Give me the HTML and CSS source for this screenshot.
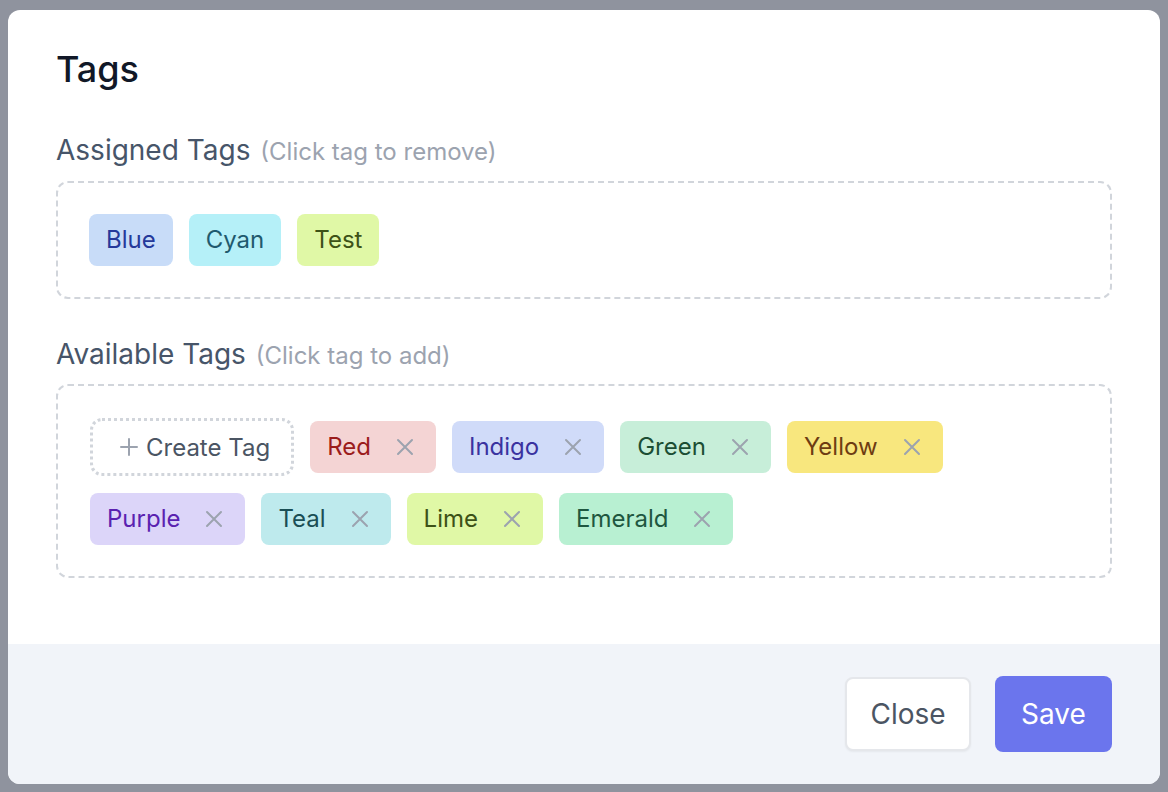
FILE: index.html
```html
<!DOCTYPE html>
<html>
<head>
<meta charset="utf-8">
<link rel="stylesheet" href="styles.css">
</head>
<body>
<div class="backdrop">
  <div class="modal">
    <div class="modal-body">
      <h2 class="title">Tags</h2>

      <div class="label">Assigned Tags <span class="hint">(Click tag to remove)</span></div>
      <div class="box box-assigned">
        <span class="tag t-blue">Blue</span>
        <span class="tag t-cyan">Cyan</span>
        <span class="tag t-lime">Test</span>
      </div>

      <div class="label label-available">Available Tags <span class="hint">(Click tag to add)</span></div>
      <div class="box box-available">
        <span class="create">
          <svg class="plus" viewBox="0 0 18 18" width="18" height="18"><path d="M9 1v16M1 9h16" stroke="#9ca3af" stroke-width="2" fill="none" stroke-linecap="round"/></svg>
          Create Tag
        </span>
        <span class="tag rm t-red">Red<svg class="x" viewBox="0 0 18 18" width="18" height="18"><path d="M2 2l14 14M16 2L2 16" stroke="currentColor" stroke-width="2" fill="none" stroke-linecap="round"/></svg></span>
        <span class="tag rm t-indigo">Indigo<svg class="x" viewBox="0 0 18 18" width="18" height="18"><path d="M2 2l14 14M16 2L2 16" stroke="currentColor" stroke-width="2" fill="none" stroke-linecap="round"/></svg></span>
        <span class="tag rm t-green">Green<svg class="x" viewBox="0 0 18 18" width="18" height="18"><path d="M2 2l14 14M16 2L2 16" stroke="currentColor" stroke-width="2" fill="none" stroke-linecap="round"/></svg></span>
        <span class="tag rm t-yellow">Yellow<svg class="x" viewBox="0 0 18 18" width="18" height="18"><path d="M2 2l14 14M16 2L2 16" stroke="currentColor" stroke-width="2" fill="none" stroke-linecap="round"/></svg></span>
        <span class="tag rm t-purple">Purple<svg class="x" viewBox="0 0 18 18" width="18" height="18"><path d="M2 2l14 14M16 2L2 16" stroke="currentColor" stroke-width="2" fill="none" stroke-linecap="round"/></svg></span>
        <span class="tag rm t-teal">Teal<svg class="x" viewBox="0 0 18 18" width="18" height="18"><path d="M2 2l14 14M16 2L2 16" stroke="currentColor" stroke-width="2" fill="none" stroke-linecap="round"/></svg></span>
        <span class="tag rm t-lime">Lime<svg class="x" viewBox="0 0 18 18" width="18" height="18"><path d="M2 2l14 14M16 2L2 16" stroke="currentColor" stroke-width="2" fill="none" stroke-linecap="round"/></svg></span>
        <span class="tag rm t-emerald">Emerald<svg class="x" viewBox="0 0 18 18" width="18" height="18"><path d="M2 2l14 14M16 2L2 16" stroke="currentColor" stroke-width="2" fill="none" stroke-linecap="round"/></svg></span>
      </div>
    </div>
    <div class="modal-footer">
      <button class="btn btn-close">Close</button>
      <button class="btn btn-save">Save</button>
    </div>
  </div>
</div>
</body>
</html>
```

FILE: styles.css
```css
* { box-sizing: border-box; }
html, body {
  margin: 0;
  padding: 0;
  width: 1168px;
  height: 792px;
  overflow: hidden;
  font-family: Inter, "Noto Sans", "Liberation Sans", sans-serif;
}
.backdrop {
  width: 1168px;
  height: 792px;
  background: #8f939e;
  padding: 10px 8px 8px 8px;
}
.modal {
  width: 1152px;
  height: 774px;
  background: #ffffff;
  border-radius: 12px;
  overflow: hidden;
  display: flex;
  flex-direction: column;
}
.modal-body {
  padding: 35px 48px 0 48px;
  flex: 1;
}
.title {
  margin: 0;
  font-size: 36px;
  line-height: 48px;
  font-weight: 500;
  color: #111827;
}
.label {
  margin-top: 37px;
  font-size: 28px;
  line-height: 40px;
  color: #475569;
  font-weight: 400;
}
.label-available { margin-top: 35px; }
.hint {
  font-size: 24px;
  color: #9ca3af;
  margin-left: 2px;
}
.box {
  border: 2px dashed #d1d5db;
  border-radius: 12px;
  display: flex;
  flex-wrap: wrap;
  align-items: center;
  gap: 17px 16px;
}
.box-assigned { margin-top: 9px; padding: 31px; }
.box-available { margin-top: 8px; padding: 32px 32px 31px 32px; }
.tag {
  display: inline-flex;
  align-items: center;
  height: 52px;
  padding: 0 17px;
  border-radius: 8px;
  font-size: 24px;
  line-height: 30px;
}
.tag.rm { padding-right: 22px; }
.tag .x {
  margin-left: 25px;
  color: #9ca3af;
}
.create {
  display: inline-flex;
  align-items: center;
  height: 58px;
  padding: 0 21px 0 27px;
  border: 3px dotted #d1d5db;
  border-radius: 12px;
  font-size: 24px;
  color: #4b5563;
}
.create .plus { margin-right: 8px; }
.t-blue { background: #c8dcf8; color: #25399a; }
.t-cyan { background: #b5f0f8; color: #1f5a6e; }
.t-lime { background: #e0f8a6; color: #3d5217; }
.t-red { background: #f4d4d4; color: #9b1c1c; }
.t-indigo { background: #d0dbf9; color: #3a32a0; }
.t-green { background: #c7eed9; color: #1c4e34; }
.t-yellow { background: #f8e77e; color: #6e3d12; }
.t-purple { background: #dcd5f9; color: #5a22b0; }
.t-teal { background: #beeaed; color: #1a4e55; }
.t-emerald { background: #b8f0d2; color: #1f5740; }
.modal-footer {
  height: 140px;
  background: #f1f4f9;
  display: flex;
  justify-content: flex-end;
  align-items: center;
  gap: 24px;
  padding: 0 48px;
}
.btn {
  font-family: inherit;
  font-size: 28px;
  height: 76px;
  border-radius: 8px;
  cursor: pointer;
}
.btn-close {
  width: 126px;
  height: 74px;
  background: #ffffff;
  border: 2px solid #e5e7eb;
  color: #4b5563;
  box-shadow: 0 1px 2px rgba(0,0,0,0.05);
}
.btn-save {
  width: 117px;
  background: #6b75ed;
  border: none;
  color: #ffffff;
}
```
